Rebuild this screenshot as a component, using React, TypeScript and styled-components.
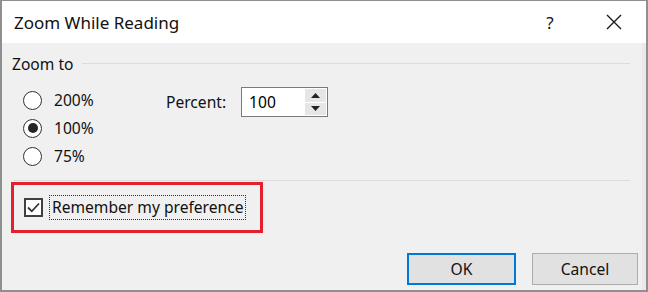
import React from "react";
import styled, { createGlobalStyle } from "styled-components";

const Global = createGlobalStyle`
  html, body { margin: 0; padding: 0; background: #ffffff; }
  * { box-sizing: border-box; }
`;

const Dialog = styled.div`
  width: 648px;
  height: 292px;
  border: 2px solid #8f8f8f;
  border-top-width: 1px;
  background: #f0f0f0;
  display: flex;
  flex-direction: column;
  font-family: "Noto Sans", "Open Sans", sans-serif;
  color: #111111;
  font-size: 15.6px;
`;

const TitleBar = styled.div`
  height: 42px;
  background: #ffffff;
  display: flex;
  align-items: center;
  padding-left: 12px;
  flex-shrink: 0;
`;

const Title = styled.div`
  font-size: 17px;
  flex: 1;
  color: #111111;
`;

const TitleButton = styled.div<{ $size?: number }>`
  width: 64px;
  height: 42px;
  display: flex;
  align-items: center;
  justify-content: center;
  color: #111111;
  font-size: ${(p) => p.$size ?? 16}px;
`;

const Body = styled.div`
  flex: 1;
  display: flex;
  flex-direction: column;
  padding: 0 12px 0 10px;
  border-right: 4px solid #e9e9e9;
`;

const GroupHeader = styled.div`
  height: 40px;
  display: flex;
  align-items: center;
  gap: 8px;
  padding-top: 1px;
`;

const Rule = styled.div`
  flex: 1;
  height: 1px;
  background: #dcdcdc;
`;

const OptionsArea = styled.div`
  display: flex;
  padding-left: 11px;
  height: 97px;
`;

const RadioList = styled.div`
  display: flex;
  flex-direction: column;
  width: 143px;
  padding-top: 3px;
`;

const RadioRow = styled.div`
  height: 28px;
  display: flex;
  align-items: center;
  gap: 12px;
`;

const RadioCircle = styled.span<{ $checked?: boolean }>`
  width: 19px;
  height: 19px;
  border-radius: 50%;
  border: 1.6px solid #333333;
  background: #ffffff;
  display: flex;
  align-items: center;
  justify-content: center;
  &::after {
    content: "";
    width: 10px;
    height: 10px;
    border-radius: 50%;
    background: ${(p) => (p.$checked ? "#262626" : "transparent")};
  }
`;

const PercentGroup = styled.div`
  height: 30px;
  margin-top: 4px;
  display: flex;
  align-items: center;
  gap: 15px;
`;

const SpinBox = styled.div`
  width: 87px;
  height: 30px;
  border: 1px solid #7a7a7a;
  background: #ffffff;
  display: flex;
  padding: 1px;
`;

const SpinValue = styled.div`
  flex: 1;
  padding-left: 6px;
  display: flex;
  align-items: center;
  color: #000000;
`;

const SpinButtons = styled.div`
  width: 21px;
  display: flex;
  flex-direction: column;
  gap: 1px;
`;

const SpinButton = styled.div`
  flex: 1;
  background: #e6e6e6;
  display: flex;
  align-items: center;
  justify-content: center;
`;

const Separator = styled.div`
  height: 1px;
  background: #dcdcdc;
  margin-left: 2px;
`;

const Highlight = styled.div`
  margin-top: 1px;
  margin-left: -1px;
  width: 252px;
  height: 51px;
  border: 3px solid #e3202d;
  display: flex;
  align-items: center;
  padding-left: 10px;
  gap: 7px;
`;

const CheckBox = styled.span`
  width: 19px;
  height: 19px;
  border: 2px solid #404040;
  background: #ffffff;
  display: flex;
  align-items: center;
  justify-content: center;
`;

const FocusLabel = styled.span`
  outline: 1px dotted #333333;
  padding: 0 2px 1px 2px;
  line-height: 22px;
`;

const Footer = styled.div`
  margin-top: auto;
  display: flex;
  justify-content: flex-end;
  gap: 16px;
  padding: 0 0 5px 0;
  margin-right: -8px;
`;

const Button = styled.button<{ $primary?: boolean }>`
  width: ${(p) => (p.$primary ? 109 : 106)}px;
  height: 32px;
  background: #e1e1e1;
  border: ${(p) => (p.$primary ? "2px solid #0078d7" : "1px solid #adadad")};
  font-family: inherit;
  font-size: 15.6px;
  color: #111111;
  padding: 0;
`;

const Radio = ({ label, checked }: { label: string; checked?: boolean }) => (
  <RadioRow>
    <RadioCircle $checked={checked} />
    <span>{label}</span>
  </RadioRow>
);

export default function App() {
  return (
    <>
      <Global />
      <Dialog>
        <TitleBar>
          <Title>Zoom While Reading</Title>
          <TitleButton $size={17}>?</TitleButton>
          <TitleButton>
            <svg width="16" height="16" viewBox="0 0 16 16">
              <path d="M1 1 L15 15 M15 1 L1 15" stroke="#1a1a1a" strokeWidth="1.4" />
            </svg>
          </TitleButton>
        </TitleBar>
        <Body>
          <GroupHeader>
            <span>Zoom to</span>
            <Rule />
          </GroupHeader>
          <OptionsArea>
            <RadioList>
              <Radio label="200%" />
              <Radio label="100%" checked />
              <Radio label="75%" />
            </RadioList>
            <PercentGroup>
              <span>Percent:</span>
              <SpinBox>
                <SpinValue>100</SpinValue>
                <SpinButtons>
                  <SpinButton>
                    <svg width="9" height="5" viewBox="0 0 9 5">
                      <path d="M0 5 L4.5 0 L9 5 Z" fill="#222" />
                    </svg>
                  </SpinButton>
                  <SpinButton>
                    <svg width="9" height="5" viewBox="0 0 9 5">
                      <path d="M0 0 L4.5 5 L9 0 Z" fill="#222" />
                    </svg>
                  </SpinButton>
                </SpinButtons>
              </SpinBox>
            </PercentGroup>
          </OptionsArea>
          <Separator />
          <Highlight>
            <CheckBox>
              <svg width="13" height="11" viewBox="0 0 13 11">
                <path d="M1 5.5 L4.8 9.3 L12 1.5" stroke="#333" strokeWidth="1.8" fill="none" />
              </svg>
            </CheckBox>
            <FocusLabel>Remember my preference</FocusLabel>
          </Highlight>
          <Footer>
            <Button $primary>OK</Button>
            <Button>Cancel</Button>
          </Footer>
        </Body>
      </Dialog>
    </>
  );
}
